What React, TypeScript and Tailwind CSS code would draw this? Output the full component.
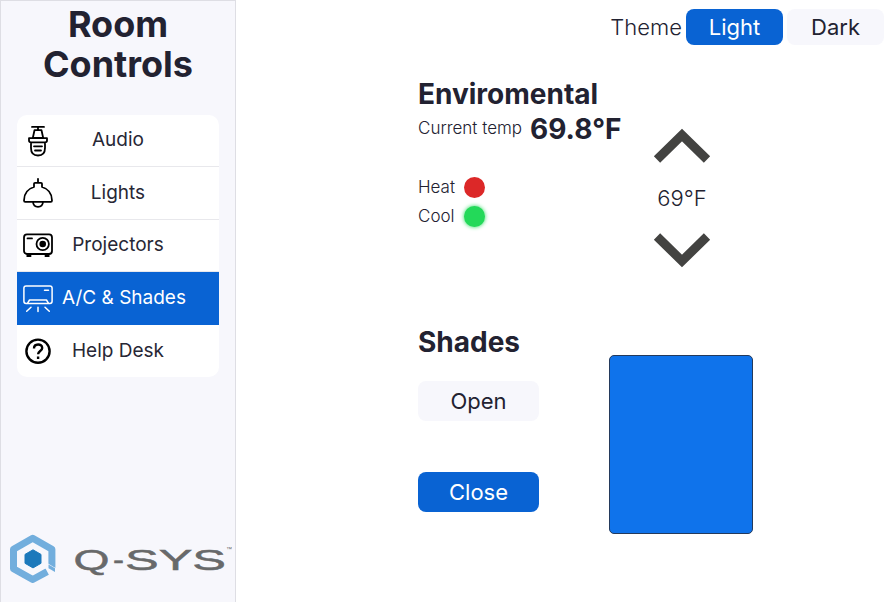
import type { ReactNode } from 'react';

function MicIcon() {
  return (
    <svg width="30" height="32" viewBox="0 0 30 32" fill="none" stroke="#000" strokeWidth="1.8" strokeLinecap="round" strokeLinejoin="round">
      <path d="M9 1.9H21M15 2V5M11.5 5.2H18.5L20.2 13H9.8ZM6 13.2H24V15.6Q24 17.4 22 17.4H8Q6 17.4 6 15.6ZM8 17.6V23Q8 30.5 15 30.5Q22 30.5 22 23V17.6M11 21.3H19M12 25.5H18" />
    </svg>
  );
}

function LampIcon() {
  return (
    <svg width="30" height="32" viewBox="0 0 30 32" fill="none" stroke="#000" strokeWidth="1.8" strokeLinecap="round" strokeLinejoin="round">
      <path d="M15 1.8V5.6M11 10V6.8Q11 5.8 12 5.8H18Q19 5.8 19 6.8V10C25.5 12 29 17 29 23.4Q29 24.8 27.8 24.8H2.2Q1 24.8 1 23.4C1 17 4.5 12 11 10ZM10 25C10.5 31.5 19.5 31.5 20 25" />
    </svg>
  );
}

function ProjectorIcon() {
  return (
    <svg width="30" height="32" viewBox="0 0 30 32" fill="none" stroke="#000" strokeWidth="1.8">
      <rect x="1" y="5.4" width="28" height="19.6" rx="3" />
      <circle cx="19.7" cy="15" r="6.2" />
      <circle cx="19.7" cy="15" r="3.3" fill="#000" stroke="none" />
      <path d="M4.5 9.4H9" strokeLinecap="round" />
      <path d="M3.5 26.6H8.3M21.7 26.6H26.5" strokeWidth="2.6" />
    </svg>
  );
}

function AirConIcon() {
  return (
    <svg width="30" height="32" viewBox="0 0 30 32" fill="none" stroke="#fff" strokeWidth="1.5" strokeLinecap="round" strokeLinejoin="round">
      <rect x="0.9" y="3.9" width="28.2" height="17.6" rx="2.2" />
      <path d="M21.5 8.2H25.5M4.5 21.3L6.5 18H23.5L25.5 21.3M8 25.3L3.7 29.3M15 25.3V29.6M22 25.3L26.3 29.3" />
    </svg>
  );
}

function HelpIcon() {
  return (
    <svg width="30" height="32" viewBox="0 0 30 32" fill="none" stroke="#000" strokeWidth="2.4">
      <circle cx="15" cy="16.2" r="11.6" />
      <path d="M11 13.4C11 8.2 19.2 8.2 19.2 12.9C19.2 16 15.1 16 15.1 19.3" />
      <path d="M15.1 21.4V23.9" />
    </svg>
  );
}

function Logo() {
  return (
    <svg width="232" height="50" viewBox="0 0 232 50" className="block">
      <path d="M52.2 35V16.5L33 5.6L13.8 16.5V36L33 46.8L47.5 39" transform="translate(-.3 -.3)" fill="none" stroke="#72aedd" strokeWidth="7" strokeLinejoin="round" />
      <path d="M43 27.5L57 36V42L43 34Z" fill="#f7f7fc" />
      <path d="M48.5 31.5L55 35.2V39L48.5 35.3Z" fill="#72aedd" />
      <path d="M33 16.8L41 21.4V30.3L33 34.9L25 30.3V21.4Z" fill="#1c79bb" stroke="#1c79bb" strokeLinejoin="round" />
      <g fill="#68696a" fontFamily="'Liberation Sans', Arial, sans-serif" fontSize="30" fontWeight="400" stroke="#68696a" strokeWidth=".5">
        <text x="73.5" y="36.5" textLength="36" lengthAdjust="spacingAndGlyphs">Q</text>
        <text x="113" y="36.5" textLength="11" lengthAdjust="spacingAndGlyphs">-</text>
        <text x="125" y="36.5" textLength="101" lengthAdjust="spacingAndGlyphs">SYS</text>
      </g>
      <text x="226" y="18" fontSize="6" fill="#68696a" fontFamily="'Liberation Sans', Arial, sans-serif">™</text>
    </svg>
  );
}

type RowProps = { icon: ReactNode; label: string; active?: boolean; last?: boolean };

function NavRow({ icon, label, active, last }: RowProps) {
  return (
    <button
      className={`relative flex h-[52.4px] w-full items-center justify-center text-[19px] ${
        active ? 'bg-[#0963d3] text-white' : 'bg-white text-[#272735]'
      } ${active || last ? '' : 'border-b border-[#e8e8ec]'}`}
    >
      <span className="absolute left-[6px]">{icon}</span>
      <span className={active ? 'pl-[12px]' : ''}>{label}</span>
    </button>
  );
}

function Arrow({ down }: { down?: boolean }) {
  return (
    <svg width="58" height="36" viewBox="0 0 58 36" className={down ? 'rotate-180' : ''}>
      <path d="M4 31.5L29 7L54 31.5" fill="none" stroke="#434341" strokeWidth="9" />
    </svg>
  );
}

export default function App() {
  return (
    <div className="flex h-[602px] w-[896px] overflow-hidden bg-white font-['Inter','Liberation_Sans',sans-serif] text-[#222231]">
      <aside className="flex w-[236px] shrink-0 flex-col border border-b-0 border-[#dedee4] bg-[#f7f7fc]">
        <h1 className="mt-[3px] text-center text-[36px] leading-10 font-bold">
          Room
          <br />
          Controls
        </h1>
        <nav className="mt-[31px] ml-4 w-[202px] overflow-hidden rounded-[10px]">
          <NavRow icon={<MicIcon />} label="Audio" />
          <NavRow icon={<LampIcon />} label="Lights" />
          <NavRow icon={<ProjectorIcon />} label="Projectors" />
          <NavRow icon={<AirConIcon />} label="A/C & Shades" active />
          <NavRow icon={<HelpIcon />} label="Help Desk" last />
        </nav>
        <div className="mt-auto -ml-px mb-[19px]">
          <Logo />
        </div>
      </aside>
      <main className="flex flex-1 flex-col">
        <div className="mt-[9px] mr-3 flex h-9 items-center justify-end gap-1 text-[22px]">
          <span className="font-light">Theme</span>
          <button className="h-9 w-[97px] rounded-[8px] bg-[#0963d3] text-white">Light</button>
          <button className="h-9 w-[97px] rounded-[8px] bg-[#f7f7fc]">Dark</button>
        </div>
        <section className="mt-[32px] ml-[182px] flex h-[249px]">
          <div className="w-[235px]">
            <h2 className="text-[28px] leading-[34px] font-bold">Enviromental</h2>
            <div className="flex h-9 items-center gap-2 whitespace-nowrap">
              <span className="text-[17px] font-light">Current temp</span>
              <span className="text-[28px] font-bold">69.8°F</span>
            </div>
            <div className="mt-[26px] flex h-[29px] items-center text-[17px] font-light">
              <span className="w-[46px]">Heat</span>
              <span className="h-[21px] w-[21px] rounded-full bg-[#dc2828]" />
            </div>
            <div className="flex h-[29px] items-center text-[17px] font-light">
              <span className="w-[46px]">Cool</span>
              <span className="h-[21px] w-[21px] rounded-full bg-[#23d959] shadow-[0_0_4px_#23d959]" />
            </div>
          </div>
          <div className="mt-[51px] flex w-[58px] flex-col items-center">
            <Arrow />
            <span className="my-[18px] text-[22px] leading-8 font-light">69°F</span>
            <Arrow down />
          </div>
        </section>
        <section className="ml-[182px] flex">
          <div className="w-[191px]">
            <h2 className="text-[28px] leading-[32px] font-bold">Shades</h2>
            <button className="mt-[23px] block h-10 w-[121px] rounded-[8px] bg-[#f7f7fc] text-[22px]">Open</button>
            <button className="mt-[51px] block h-10 w-[121px] rounded-[8px] bg-[#0963d3] text-[22px] text-white">Close</button>
          </div>
          <div className="mt-[29px] h-[179px] w-[144px] rounded-[5px] border border-[#243a5c] bg-[#0f73eb]" />
        </section>
      </main>
    </div>
  );
}
